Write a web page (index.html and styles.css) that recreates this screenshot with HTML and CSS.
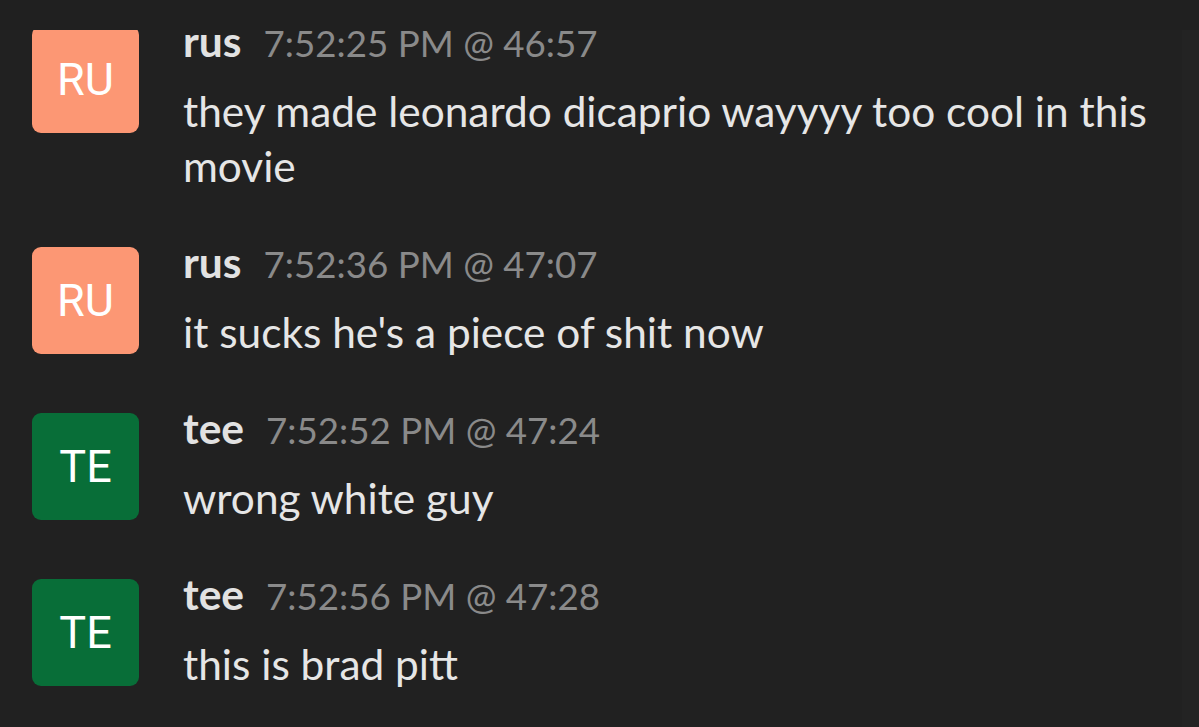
FILE: index.html
```html
<!DOCTYPE html>
<html lang="en">

<head>
   <meta charset="UTF-8">
   <meta name="viewport" content="width=device-width, initial-scale=1.0">
   <link rel="stylesheet" href="styles.css">
   <title>Chat</title>
</head>

<body>
   <div id="topbar"></div>

   <main>
      <div id="chat">
         <div id="feed">

            <div class="message">
               <div class="avatar orange">RU</div>
               <div class="content">
                  <div class="header">
                     <span class="name">rus</span>
                     <span class="time">7:52:25 PM @ 46:57</span>
                  </div>
                  <div class="text">they made leonardo dicaprio wayyyy too cool in this movie</div>
               </div>
            </div>

            <div class="message">
               <div class="avatar orange">RU</div>
               <div class="content">
                  <div class="header">
                     <span class="name">rus</span>
                     <span class="time">7:52:36 PM @ 47:07</span>
                  </div>
                  <div class="text">it sucks he's a piece of shit now</div>
               </div>
            </div>

            <div class="message">
               <div class="avatar green">TE</div>
               <div class="content">
                  <div class="header">
                     <span class="name">tee</span>
                     <span class="time">7:52:52 PM @ 47:24</span>
                  </div>
                  <div class="text">wrong white guy</div>
               </div>
            </div>

            <div class="message">
               <div class="avatar green">TE</div>
               <div class="content">
                  <div class="header">
                     <span class="name">tee</span>
                     <span class="time">7:52:56 PM @ 47:28</span>
                  </div>
                  <div class="text">this is brad pitt</div>
               </div>
            </div>

         </div>
      </div>

      <div id="scrollbar"></div>
   </main>
</body>

</html>
```

FILE: styles.css
```css
* {
   padding: 0;
   margin: 0;
   box-sizing: border-box;
}

body {
   font-family: Lato, "Noto Sans", sans-serif;
   background-color: #212121;
   color: #e4e4e4;
   height: 727px;
   overflow: hidden;
}

#topbar {
   height: 30px;
   background-color: #202020;
}

main {
   display: flex;
   height: 697px;
}

#chat {
   flex: 1;
   overflow: hidden;
}

#feed {
   margin-top: -4px;
   padding-left: 32px;
}

#scrollbar {
   width: 17px;
   background-color: #232323;
}

.message {
   display: flex;
   align-items: flex-start;
   gap: 44px;
   margin-bottom: 54px;
}

.avatar {
   flex: 0 0 107px;
   height: 107px;
   border-radius: 9px;
   display: flex;
   justify-content: center;
   align-items: center;
   font-family: Roboto, sans-serif;
   font-size: 45px;
   color: #fff;
}

.orange {
   background-color: #fc9774;
}

.green {
   background-color: #086e38;
}

.content {
   flex: 1;
   padding-right: 20px;
}

.header {
   display: flex;
   align-items: baseline;
   height: 30px;
   line-height: 30px;
   white-space: nowrap;
}

.name {
   font-weight: bold;
   font-size: 42.5px;
   color: #e2e2e2;
   margin-right: 22px;
}

.time {
   font-size: 36.7px;
   color: #8a8a8a;
}

.text {
   margin-top: 27px;
   font-size: 42.4px;
   line-height: 55px;
   color: #e6e6e6;
}
```
